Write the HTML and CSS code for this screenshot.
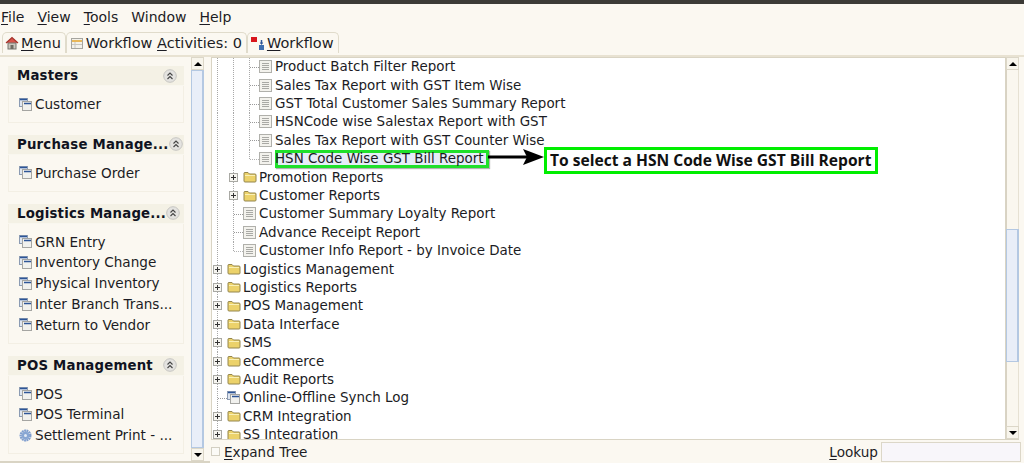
FILE: index.html
```html
<!DOCTYPE html>
<html lang="en">
<head>
<meta charset="utf-8">
<title>Menu</title>
<link rel="stylesheet" href="styles.css">
</head>
<body>
<svg class="defs" width="0" height="0" aria-hidden="true">
  <symbol id="doc" viewBox="0 0 13 13">
    <rect x="0.5" y="0.5" width="12" height="12" fill="#f3f2ed" stroke="#b0b0ab"/>
    <path d="M3 3.500h7M3 5.500h7M3 7.500h7M3 9.500h7" stroke="#a9a9a5" fill="none"/>
  </symbol>
  <symbol id="folder" viewBox="0 0 14 12">
    <path d="M1 3V2Q1 1.500 2 1.500H5L6.500 3H12Q13 3 13 4V10Q13 11 12 11H2Q1 11 1 10Z" fill="#ecd26a" stroke="#94864e"/>
    <path d="M2 4.500H12" stroke="#f9f0b6"/>
  </symbol>
  <symbol id="plus" viewBox="0 0 9 9">
    <rect x="0.500" y="0.500" width="8" height="8" fill="#f6f5f0" stroke="#a9a9a4"/>
    <path d="M2 4.500h5M4.500 2v5" stroke="#333"/>
  </symbol>
  <symbol id="win" viewBox="0 0 13 13">
    <rect x="0.500" y="0.500" width="8" height="8" fill="#dfe6f0" stroke="#8b9bb3"/>
    <rect x="3.500" y="3.500" width="9" height="9" fill="#f1f1ee" stroke="#a5a5a2"/>
    <path d="M1 1.500h7M5 5.500h7" stroke="#2d5597" stroke-width="1.400"/>
  </symbol>
  <symbol id="collapse" viewBox="0 0 14 14">
    <circle cx="7" cy="7" r="6.300" fill="#e4e3e0" stroke="#c6c5c1"/>
    <path d="M4.500 6.500 7 4l2.500 2.500M4.500 10 7 7.500 9.500 10" fill="none" stroke="#444" stroke-width="1.100"/>
  </symbol>
</svg>

<div class="titlebar"></div>

<nav class="menubar">
  <span class="menu"><u>F</u>ile</span>
  <span class="menu"><u>V</u>iew</span>
  <span class="menu"><u>T</u>ools</span>
  <span class="menu">Window</span>
  <span class="menu"><u>H</u>elp</span>
</nav>

<div class="tabs">
  <div class="tab tab-active">
    <svg class="tab-icon" viewBox="0 0 14 14"><path d="M1 7 7 1.500 13 7" fill="#d9534a" stroke="#a5342c" stroke-width="1.200"/><rect x="3" y="7" width="8" height="6" fill="#c9c6bd" stroke="#77756f"/><rect x="5.500" y="9" width="3" height="4" fill="#6f6b62"/></svg>
    <span><u>M</u>enu</span>
  </div>
  <div class="tab">
    <svg class="tab-icon" viewBox="0 0 14 14"><rect x="1.500" y="2.500" width="11" height="10" fill="#f3f1ea" stroke="#a6a59f"/><path d="M2 5h10" stroke="#e8b75a" stroke-width="2"/><path d="M5 6v6M2 8.500h10" stroke="#c8c6bf"/></svg>
    <span>Workflow <u>A</u>ctivities: 0</span>
  </div>
  <div class="tab">
    <svg class="tab-icon" viewBox="0 0 14 14"><rect x="0" y="1" width="6" height="5" fill="#d8151c"/><rect x="8" y="9" width="5" height="5" fill="#3f6fb0"/><path d="M10.500 4v4" stroke="#2d5597" stroke-width="1.500"/><path d="M8.800 6.500h3.400L10.500 9z" fill="#2d5597"/></svg>
    <span><u>W</u>orkflow</span>
  </div>
</div>

<main class="workspace">
  <aside class="sidebar">
    <div class="cards">
      <section class="card">
        <header class="card-head"><h2>Masters</h2><svg class="collapse"><use href="#collapse"/></svg></header>
        <ul class="card-body">
          <li><svg class="ico"><use href="#win"/></svg>Customer</li>
        </ul>
      </section>
      <section class="card">
        <header class="card-head"><h2>Purchase Manage...</h2><svg class="collapse"><use href="#collapse"/></svg></header>
        <ul class="card-body">
          <li><svg class="ico"><use href="#win"/></svg>Purchase Order</li>
        </ul>
      </section>
      <section class="card">
        <header class="card-head"><h2>Logistics Manage...</h2><svg class="collapse"><use href="#collapse"/></svg></header>
        <ul class="card-body">
          <li><svg class="ico"><use href="#win"/></svg>GRN Entry</li>
          <li><svg class="ico"><use href="#win"/></svg>Inventory Change</li>
          <li><svg class="ico"><use href="#win"/></svg>Physical Inventory</li>
          <li><svg class="ico"><use href="#win"/></svg>Inter Branch Trans...</li>
          <li><svg class="ico"><use href="#win"/></svg>Return to Vendor</li>
        </ul>
      </section>
      <section class="card">
        <header class="card-head"><h2>POS Management</h2><svg class="collapse"><use href="#collapse"/></svg></header>
        <ul class="card-body">
          <li><svg class="ico"><use href="#win"/></svg>POS</li>
          <li><svg class="ico"><use href="#win"/></svg>POS Terminal</li>
          <li><svg class="ico" viewBox="0 0 13 13"><circle cx="6.500" cy="6.500" r="4.800" fill="none" stroke="#7f9ecf" stroke-width="2.400" stroke-dasharray="1.800 .5"/><circle cx="6.500" cy="6.500" r="3.800" fill="#88a6d3"/><circle cx="6.500" cy="6.500" r="1.500" fill="#e3eaf5"/></svg>Settlement Print - ...</li>
        </ul>
      </section>
    </div>
    <div class="scrollbar side-scroll">
      <div class="sb-btn"><i class="arrow-up"></i></div>
      <div class="sb-thumb side-thumb"><i class="dots"></i></div>
      <div class="sb-btn"><i class="arrow-down"></i></div>
    </div>
    <div class="splitter"></div>
  </aside>

  <section class="content">
    <div class="tree-wrap">
      <div class="tree">
        <div class="row"><i class="g"></i><i class="g"></i><i class="g stub"></i><svg class="ico"><use href="#doc"/></svg><span class="lbl">Product Batch Filter Report</span></div>
        <div class="row"><i class="g"></i><i class="g"></i><i class="g stub"></i><svg class="ico"><use href="#doc"/></svg><span class="lbl">Sales Tax Report with GST Item Wise</span></div>
        <div class="row"><i class="g"></i><i class="g"></i><i class="g stub"></i><svg class="ico"><use href="#doc"/></svg><span class="lbl">GST Total Customer Sales Summary Report</span></div>
        <div class="row"><i class="g"></i><i class="g"></i><i class="g stub"></i><svg class="ico"><use href="#doc"/></svg><span class="lbl">HSNCode wise Salestax Report with GST</span></div>
        <div class="row"><i class="g"></i><i class="g"></i><i class="g stub"></i><svg class="ico"><use href="#doc"/></svg><span class="lbl">Sales Tax Report with GST Counter Wise</span></div>
        <div class="row"><i class="g"></i><i class="g"></i><i class="g stub end"></i><svg class="ico"><use href="#doc"/></svg><span class="lbl picked">HSN Code Wise GST Bill Report</span></div>
        <div class="row"><i class="g"></i><i class="g exp"><svg class="plus"><use href="#plus"/></svg></i><svg class="fold"><use href="#folder"/></svg><span class="lbl lbl-folder">Promotion Reports</span></div>
        <div class="row"><i class="g"></i><i class="g exp"><svg class="plus"><use href="#plus"/></svg></i><svg class="fold"><use href="#folder"/></svg><span class="lbl lbl-folder">Customer Reports</span></div>
        <div class="row"><i class="g"></i><i class="g stub"></i><svg class="ico"><use href="#doc"/></svg><span class="lbl">Customer Summary Loyalty Report</span></div>
        <div class="row"><i class="g"></i><i class="g stub"></i><svg class="ico"><use href="#doc"/></svg><span class="lbl">Advance Receipt Report</span></div>
        <div class="row"><i class="g"></i><i class="g stub end"></i><svg class="ico"><use href="#doc"/></svg><span class="lbl">Customer Info Report - by Invoice Date</span></div>
        <div class="row"><i class="g exp"><svg class="plus"><use href="#plus"/></svg></i><svg class="fold"><use href="#folder"/></svg><span class="lbl lbl-folder">Logistics Management</span></div>
        <div class="row"><i class="g exp"><svg class="plus"><use href="#plus"/></svg></i><svg class="fold"><use href="#folder"/></svg><span class="lbl lbl-folder">Logistics Reports</span></div>
        <div class="row"><i class="g exp"><svg class="plus"><use href="#plus"/></svg></i><svg class="fold"><use href="#folder"/></svg><span class="lbl lbl-folder">POS Management</span></div>
        <div class="row"><i class="g exp"><svg class="plus"><use href="#plus"/></svg></i><svg class="fold"><use href="#folder"/></svg><span class="lbl lbl-folder">Data Interface</span></div>
        <div class="row"><i class="g exp"><svg class="plus"><use href="#plus"/></svg></i><svg class="fold"><use href="#folder"/></svg><span class="lbl lbl-folder">SMS</span></div>
        <div class="row"><i class="g exp"><svg class="plus"><use href="#plus"/></svg></i><svg class="fold"><use href="#folder"/></svg><span class="lbl lbl-folder">eCommerce</span></div>
        <div class="row"><i class="g exp"><svg class="plus"><use href="#plus"/></svg></i><svg class="fold"><use href="#folder"/></svg><span class="lbl lbl-folder">Audit Reports</span></div>
        <div class="row"><i class="g stub"></i><svg class="ico"><use href="#win"/></svg><span class="lbl">Online-Offline Synch Log</span></div>
        <div class="row"><i class="g exp"><svg class="plus"><use href="#plus"/></svg></i><svg class="fold"><use href="#folder"/></svg><span class="lbl lbl-folder">CRM Integration</span></div>
        <div class="row"><i class="g exp"><svg class="plus"><use href="#plus"/></svg></i><svg class="fold"><use href="#folder"/></svg><span class="lbl lbl-folder">SS Integration</span></div>
      </div>
      <div class="scrollbar tree-scroll">
        <div class="sb-btn"><i class="arrow-up"></i></div>
        <div class="sb-track">
          <div class="sb-thumb tree-thumb"><i class="dots"></i></div>
        </div>
        <div class="sb-btn"><i class="arrow-down"></i></div>
      </div>
    </div>
    <footer class="status">
      <label class="expand"><span class="check"></span><span><u>E</u>xpand Tree</span></label>
      <label class="lookup"><span><u>L</u>ookup</span><span class="lookup-input"></span></label>
    </footer>
  </section>
</main>

<div class="callout">To select a HSN Code Wise GST Bill Report</div>
<svg class="pointer" viewBox="0 0 56 18" aria-hidden="true"><path d="M0 9H40" stroke="#000" stroke-width="3"/><path d="M35 1 56 9 35 17 39 9Z" fill="#000"/></svg>
</body>
</html>
```
FILE: styles.css
```css
* { box-sizing: border-box; }
html, body { margin: 0; height: 463px; overflow: hidden; }
body {
  position: relative;
  background: #fbf8f1;
  color: #1c1c24;
  font-family: "DejaVu Sans", sans-serif;
  font-size: 13.600px;
  display: flex;
  flex-direction: column;
}
.defs { position: absolute; }
u { text-underline-offset: 2px; text-decoration-thickness: 1px; }

.titlebar { height: 4px; background: #3c3b37; flex: none; }

.menubar {
  height: 26px;
  flex: none;
  display: flex;
  align-items: center;
  padding-left: 1px;
  gap: 13px;
  font-size: 14px;
}
.menubar .menu { white-space: nowrap; }

.tabs {
  height: 27px;
  flex: none;
  display: flex;
  align-items: flex-end;
  padding: 0 0 2px 2px;
  border-bottom: 2px solid #e8e2d2;
}
.tab {
  height: 21px;
  display: flex;
  align-items: center;
  gap: 2px;
  padding: 0 4px 0 3px;
  border: 1px solid #e0dbcb;
  border-bottom: 0;
  border-radius: 5px 5px 0 0;
  white-space: nowrap;
  font-size: 14.500px;
}
.tab-active { background: #fbf8f1; padding-left: 2px; }
.tab-icon { width: 14px; height: 14px; flex: none; }

.workspace { flex: 1; min-height: 0; display: flex; }

.sidebar {
  width: 210px;
  flex: none;
  display: flex;
  border-bottom: 2px solid #d9d4c4;
}
.cards {
  width: 191px;
  flex: none;
  padding: 9px 7px 0 8px;
  display: flex;
  flex-direction: column;
  gap: 12px;
  overflow: hidden;
}
.card { border: 1px solid #f3efe4; background: #fbf8f1; flex: none; }
.card-head {
  height: 20px;
  margin: -1px -1px 0;
  background: #f4f1e5;
  border-bottom: 1px solid #f9f7ef;
  padding-left: 9px;
  padding-right: 7px;
  display: flex;
  align-items: center;
  justify-content: space-between;
}
.card-head h2 {
  margin: 0;
  font-size: 13.300px;
  font-weight: 700;
  color: #10131f;
  letter-spacing: .2px;
  white-space: nowrap;
}
.collapse { width: 14px; height: 14px; flex: none; }
.card-body { list-style: none; margin: 0; padding: 7.700px 0 7.300px; }
.card-body li {
  height: 20.800px;
  display: flex;
  align-items: center;
  gap: 3px;
  padding-left: 10px;
  white-space: nowrap;
}
.ico { width: 13px; height: 13px; flex: none; }

.scrollbar { flex: none; display: flex; flex-direction: column; }
.side-scroll { width: 13px; }
.tree-scroll { width: 13px; }
.sb-btn {
  height: 13px;
  flex: none;
  background: #f8f5ec;
  border: 1px solid #dcd7c8;
  display: flex;
  align-items: center;
  justify-content: center;
}
.arrow-up { border: 4px solid transparent; border-top: 0; border-bottom: 4px solid #000; }
.arrow-down { border: 4px solid transparent; border-bottom: 0; border-top: 4px solid #000; }
.sb-thumb {
  background: #e9eef8;
  border: 1px solid #b4c8e2;
  border-right-width: 2px;
  display: flex;
  align-items: center;
  justify-content: center;
}
.side-thumb { flex: 1; }
.sb-track {
  flex: 1;
  background: #faf7ef;
  border-left: 1px solid #d8d2c3;
  border-right: 1px solid #e6e1d3;
  padding-top: 159px;
}
.tree-thumb { height: 133px; margin: 0 -1px; }
.dots {
  display: block;
  width: 8px;
  height: 26px;
  background-image: radial-gradient(#b6c7e0 45%, transparent 50%);
  background-size: 2px 2px;
}
.splitter { width: 6px; flex: none; }

.content { flex: 1; min-width: 0; display: flex; flex-direction: column; padding: 0 5px 0 1px; }
.tree-wrap { flex: 1; min-height: 0; display: flex; border-bottom: 1px solid #d9d4c4; }
.tree {
  flex: 1;
  min-width: 0;
  background: #fff;
  border: 1px solid #d9d4c4;
  border-bottom: 0;
  padding-left: 1px;
  overflow: hidden;
  font-size: 13.450px;
}
.row { height: 18.400px; display: flex; align-items: center; white-space: nowrap; }
.row:first-child { margin-top: -.4px; }
.g {
  width: 16px;
  align-self: stretch;
  flex: none;
  position: relative;
  background: linear-gradient(#a8a8a8 50%, transparent 50%) 4px 0 / 1px 2px repeat-y;
}
.stub { width: 14px; }
.stub::after {
  content: "";
  position: absolute;
  left: 5px;
  right: 0;
  top: 50%;
  border-top: 1px dotted #9a9a9a;
}
.end { clip-path: inset(0 0 45% 0); }
.plus { position: absolute; left: 0; top: 50%; margin-top: -4.500px; width: 9px; height: 9px; }
.fold { width: 14px; height: 12px; flex: none; margin-left: -2px; }
.lbl { padding: 0 2px; margin-left: 1px; }
.lbl-folder { margin-left: 0; }
.picked {
  height: 18px;
  line-height: 18px;
  margin-left: 3px;
  padding: 0 5px 0 0;
  background: #e6edf8;
  box-shadow: inset 0 0 0 3px #1fe02a, 1px 1px 1px rgba(0, 0, 0, .3);
}

.status {
  height: 23px;
  flex: none;
  display: flex;
  align-items: center;
  justify-content: space-between;
}
.expand { display: flex; align-items: center; gap: 4px; }
.check { width: 9px; height: 9px; border: 1px solid #d3cfc2; background: #fbfaf6; }
.lookup { display: flex; align-items: center; gap: 3px; margin-right: -2px; }
.lookup-input { width: 140px; height: 20px; background: #f8f6fa; border: 1px solid #dcd7c8; }

.callout {
  position: absolute;
  left: 544px;
  top: 147px;
  width: 334px;
  height: 27px;
  border: 3px solid #00ee00;
  background: #fff;
  color: #111;
  font-family: "Open Sans", sans-serif;
  font-weight: 700;
  font-size: 15.600px;
  line-height: 21px;
  padding-left: 3px;
  white-space: nowrap;
}
.pointer { position: absolute; left: 488px; top: 148px; width: 56px; height: 18px; }
```
